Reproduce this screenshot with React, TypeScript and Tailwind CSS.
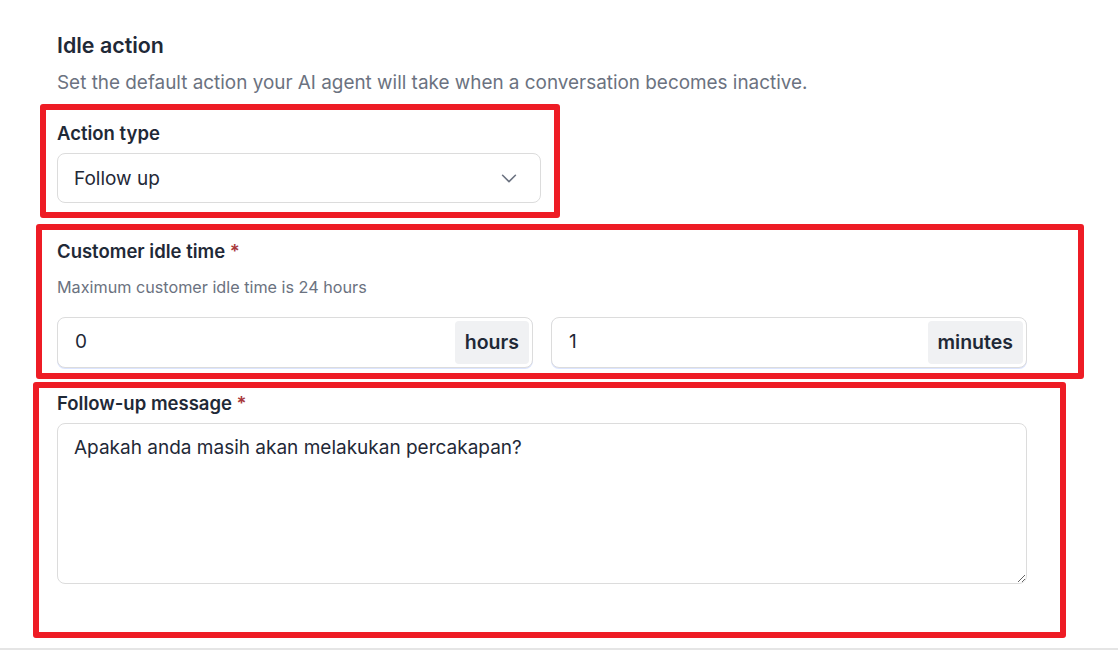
import React from "react";

function Chevron() {
  return (
    <svg width="22" height="22" viewBox="0 0 24 24" fill="none" stroke="#6b7280" strokeWidth="1.7" strokeLinecap="round" strokeLinejoin="round">
      <path d="M5 9l7 7 7-7" />
    </svg>
  );
}

function SuffixInput({ value, suffix }: { value: string; suffix: string }) {
  return (
    <div className="flex-1 h-[51px] rounded-[8px] border border-[#dcdcdc] bg-white flex items-stretch p-[3px] shadow-[0_1px_0_#dbe4ff]">
      <div className="flex-1 flex items-center pl-[14px] text-[19px] text-[#1f2937]">{value}</div>
      <div className="flex items-center px-[10px] rounded-[4px] bg-[#f0f1f3] text-[19.5px] font-semibold text-[#1f2937]">{suffix}</div>
    </div>
  );
}

export default function App() {
  return (
    <div className="relative w-[1118px] h-[658px] bg-white overflow-hidden" style={{ fontFamily: "Inter, 'Noto Sans', sans-serif" }}>
      <div className="pl-[57px] pt-[31px] w-[1027px]">
        <h2 className="text-[21.4px] leading-[28px] font-semibold text-[#1f2937]">Idle action</h2>
        <p className="mt-[12px] text-[18.9px] leading-[24px] text-[#6b7280]">
          Set the default action your AI agent will take when a conversation becomes inactive.
        </p>

        <div className="mt-[26px] w-[484px]">
          <div className="text-[18.5px] leading-[24px] font-semibold text-[#1f2937]">Action type</div>
          <div className="mt-[8px] h-[50px] rounded-[8px] border border-[#dcdcdc] flex items-center justify-between pl-[16px] pr-[20px]">
            <span className="text-[19px] leading-[26px] pt-[2px] text-[#1f2937]">Follow up</span>
            <Chevron />
          </div>
        </div>

        <div className="mt-[36px]">
          <div className="text-[18.5px] leading-[24px] font-semibold text-[#1f2937]">
            Customer idle time <span className="text-[#a8383b]">*</span>
          </div>
          <div className="mt-[14px] text-[16.2px] leading-[20px] text-[#6b7280]">Maximum customer idle time is 24 hours</div>
          <div className="mt-[20px] flex gap-[18px]">
            <SuffixInput value="0" suffix="hours" />
            <SuffixInput value="1" suffix="minutes" />
          </div>
        </div>

        <div className="mt-[23px]">
          <div className="text-[18.5px] leading-[24px] font-semibold text-[#1f2937]">
            Follow-up message <span className="text-[#a8383b]">*</span>
          </div>
          <textarea
            className="mt-[8px] block w-full h-[161px] rounded-[8px] border border-[#dcdcdc] px-[16px] py-[11px] text-[19px] leading-[26px] text-[#1f2937] outline-none"
            defaultValue="Apakah anda masih akan melakukan percakapan?"
          />
        </div>
      </div>

      <div className="absolute left-0 right-0 top-[648px] h-[2px] bg-[#e5e5e5]" />

      <div className="absolute left-[40px] top-[104px] w-[520px] h-[114px] border-[6px] border-[#ee1c25] rounded-[3px] pointer-events-none" />
      <div className="absolute left-[36px] top-[224px] w-[1048px] h-[155px] border-[6px] border-[#ee1c25] rounded-[3px] pointer-events-none" />
      <div className="absolute left-[33px] top-[382px] w-[1033px] h-[256px] border-[6px] border-[#ee1c25] rounded-[3px] pointer-events-none" />
    </div>
  );
}
